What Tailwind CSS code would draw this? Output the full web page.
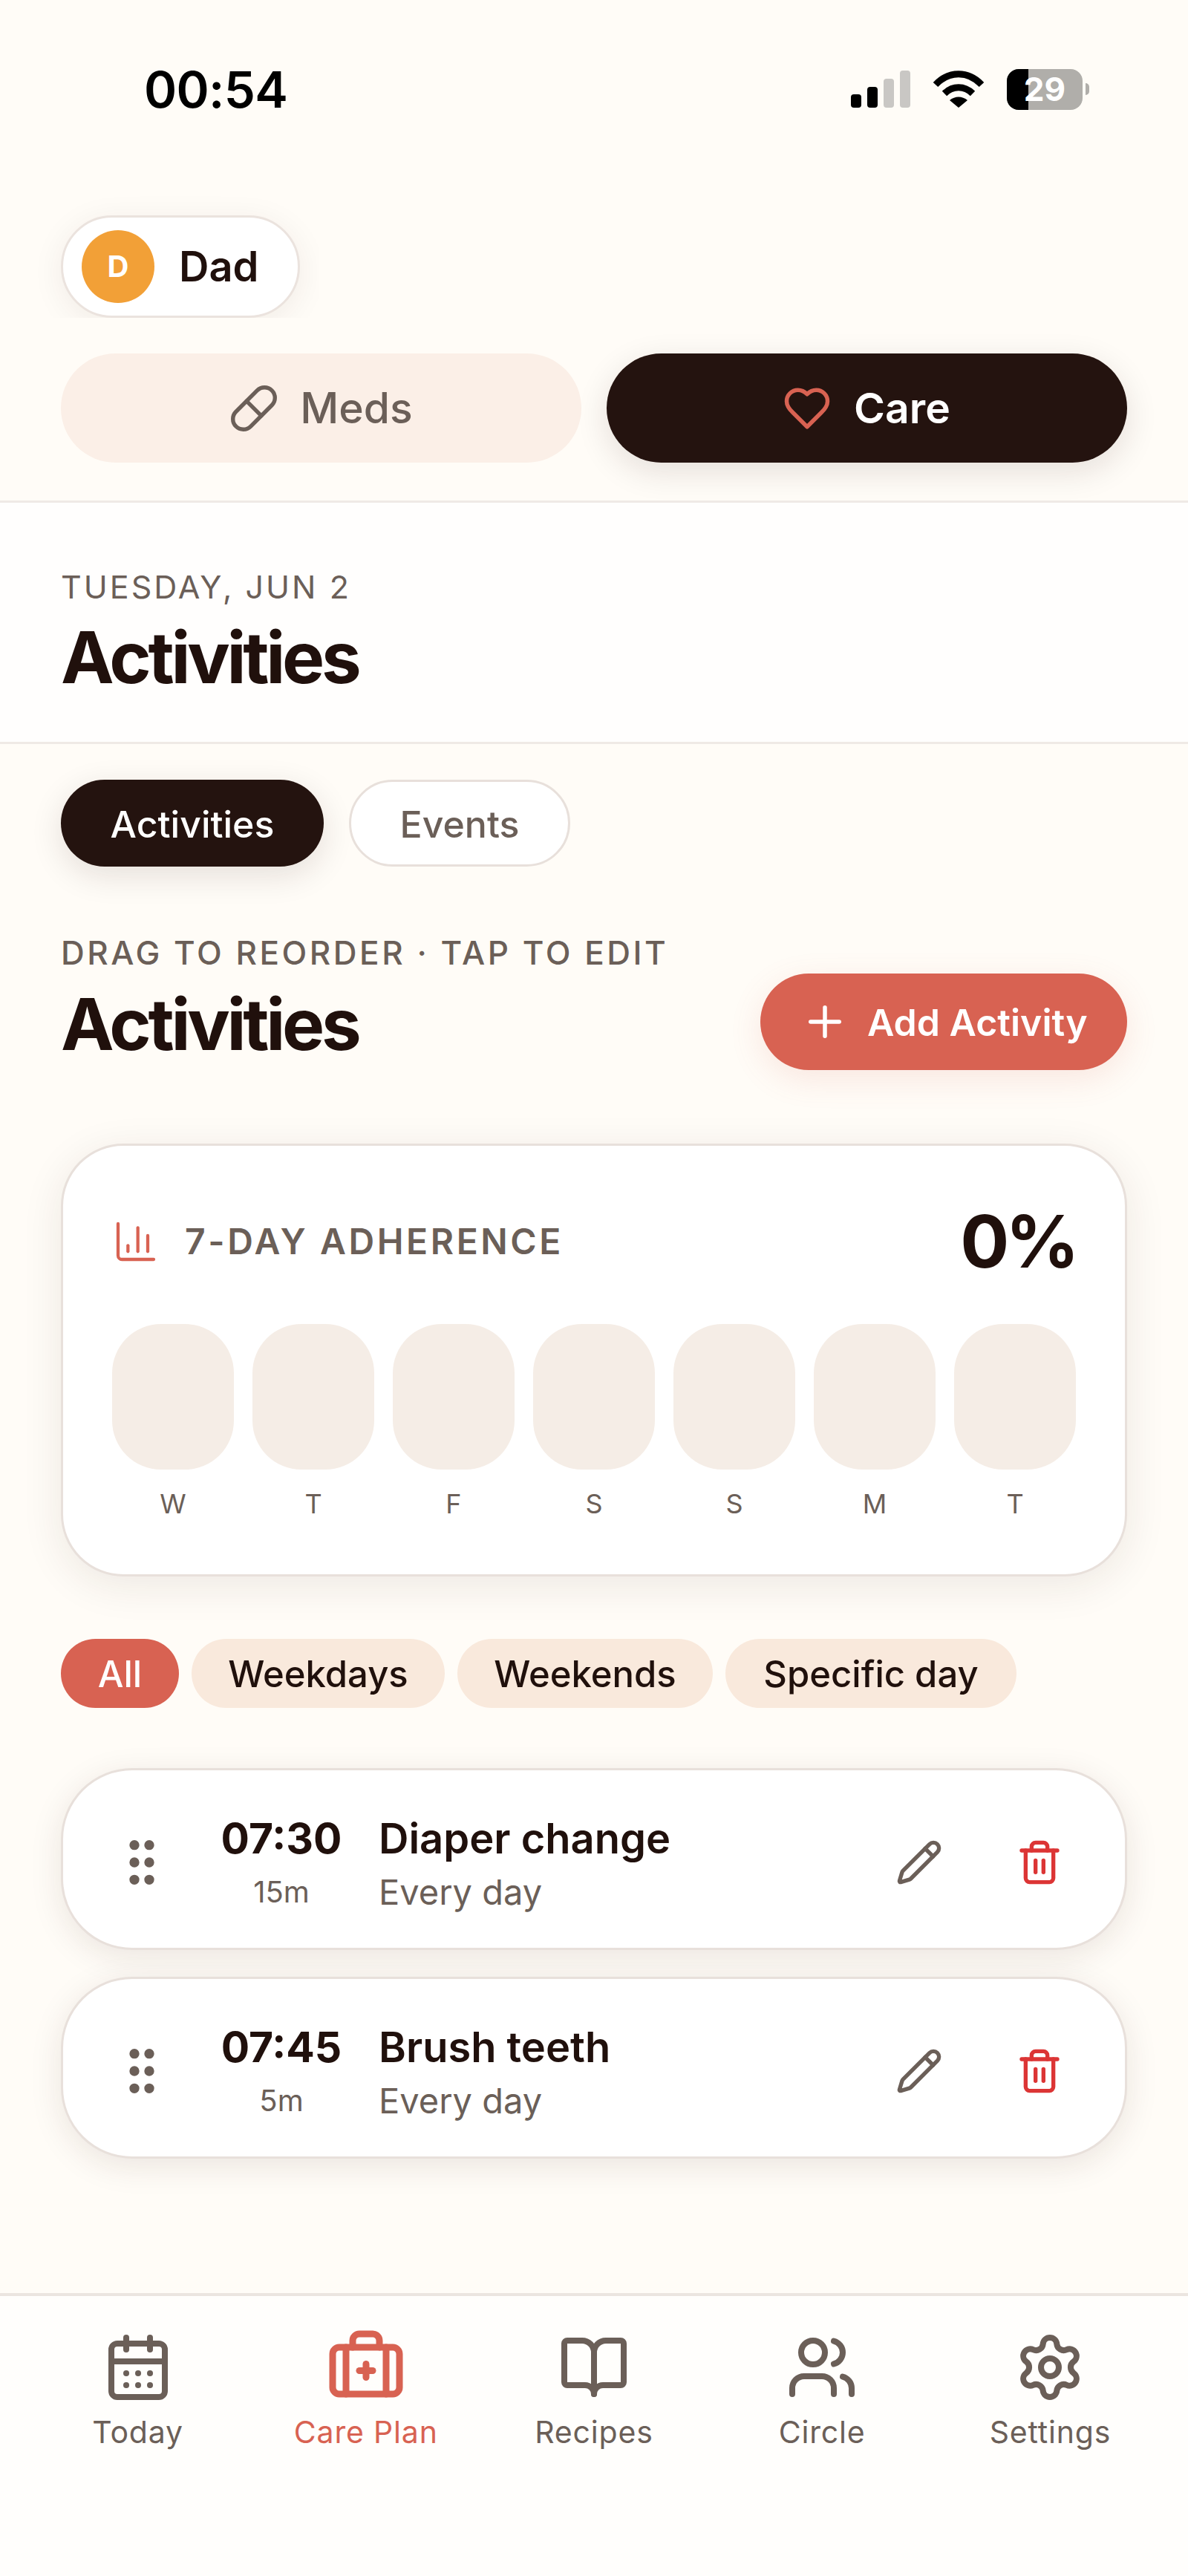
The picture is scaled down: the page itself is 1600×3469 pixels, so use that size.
<!DOCTYPE html>
<html>
<head>
<meta charset="utf-8">
<script src="https://cdn.jsdelivr.net/npm/@tailwindcss/browser@4"></script>
</head>
<body>
<div class="w-[1600px] h-[3469px] bg-[#fffcf7] flex flex-col overflow-hidden font-['Inter',sans-serif] text-[#20100c]">

  <!-- status bar -->
  <div class="h-[250px] pb-[10px] pl-[194px] pr-[133px] flex items-center justify-between text-black">
    <div class="text-[67px] leading-none font-semibold tracking-[-0.01em]">00:54</div>
    <div class="flex items-center gap-[30px]">
      <div class="flex items-end gap-[8px] h-[50px]">
        <div class="w-[14px] h-[18px] rounded-[4px] bg-black"></div>
        <div class="w-[14px] h-[28px] rounded-[4px] bg-black"></div>
        <div class="w-[14px] h-[39px] rounded-[4px] bg-[#c9c7c4]"></div>
        <div class="w-[14px] h-[50px] rounded-[4px] bg-[#c9c7c4]"></div>
      </div>
      <svg width="70" height="52" viewBox="0 0 70 52" fill="none" stroke="black" stroke-width="9" class="block">
        <path d="M4 20 C22 1 48 1 66 20"/>
        <path d="M16 32 C27 21 43 21 54 32"/>
        <path d="M35 51 L23 41 C30 35 40 35 47 41 Z" fill="black" stroke="none"/>
      </svg>
      <div class="flex items-center gap-[4px]">
        <div class="relative w-[102px] h-[55px] rounded-[16px] overflow-hidden bg-[#b0aeaa]">
          <div class="absolute left-0 top-0 bottom-0 w-[29px] bg-black"></div>
          <div class="absolute inset-0 flex items-center justify-center text-white text-[44px] leading-none font-bold">29</div>
        </div>
        <div class="w-[5px] h-[16px] rounded-r-full bg-[#b0aeaa]"></div>
      </div>
    </div>
  </div>

  <!-- person chip -->
  <div class="w-[430px] h-[178px] pl-[82px] pt-[40px] overflow-hidden">
    <div class="w-[322px] h-[138px] rounded-full bg-white border-[3px] border-[#ebe3de] shadow-[0_8px_44px_rgba(60,30,20,0.07)] flex items-center pl-[25px]">
      <div class="w-[98px] h-[98px] rounded-full bg-[#f2a037] text-white text-[40px] font-bold flex items-center justify-center">D</div>
      <div class="ml-[33px] text-[56px] leading-none font-semibold">Dad</div>
    </div>
  </div>

  <!-- meds / care -->
  <div class="mt-[48px] px-[82px] grid grid-cols-2 gap-[34px]">
    <div class="h-[147px] rounded-full bg-[#fbefe7] flex items-center justify-center gap-[28px] text-[#6b5f58]">
      <svg class="-ml-[1px]" width="68" height="68" viewBox="0 0 24 24" fill="none" stroke="currentColor" stroke-width="1.9" stroke-linecap="round" stroke-linejoin="round"><path d="m10.5 20.5 10-10a4.95 4.95 0 1 0-7-7l-10 10a4.95 4.95 0 1 0 7 7Z"/><path d="m8.5 8.5 7 7"/></svg>
      <span class="text-[57px] leading-none font-medium">Meds</span>
    </div>
    <div class="h-[147px] rounded-full bg-[#24130f] shadow-[0_12px_44px_rgba(40,20,15,0.12)] flex items-center justify-center gap-[30px] text-white">
      <svg class="-ml-[1px]" width="66" height="66" viewBox="0 0 24 24" fill="none" stroke="#d86252" stroke-width="2" stroke-linecap="round" stroke-linejoin="round"><path d="M19 14c1.49-1.46 3-3.21 3-5.5A5.5 5.5 0 0 0 16.5 3c-1.76 0-3 .5-4.5 2-1.5-1.5-2.74-2-4.5-2A5.5 5.5 0 0 0 2 8.5c0 2.3 1.5 4.05 3 5.5l7 7Z"/></svg>
      <span class="text-[57px] leading-none font-semibold">Care</span>
    </div>
  </div>

  <!-- date header -->
  <div class="mt-[51px] h-[328px] bg-[#fffefd] border-y-[3px] border-[#efeae6] px-[82px]">
    <div class="mt-[87px] text-[43px] leading-[52px] tracking-[0.07em] text-[#6b5f58]">TUESDAY, JUN 2</div>
    <div class="mt-[13px] text-[96px] leading-[112px] font-bold tracking-[-0.044em]">Activities</div>
  </div>

  <!-- main -->
  <div class="flex-1 px-[82px]">
    <div class="mt-[48px] flex gap-[34px]">
      <div class="h-[117px] w-[354px] rounded-full bg-[#24130f] shadow-[0_12px_44px_rgba(40,20,15,0.12)] text-white text-[50px] leading-[52px] font-medium flex items-center justify-center pt-[2px]">Activities</div>
      <div class="h-[117px] w-[298px] rounded-full bg-white border-[3px] border-[#e8e0db] text-[#6b5f58] text-[50px] leading-[52px] font-medium flex items-center justify-center pt-[2px]">Events</div>
    </div>

    <div class="flex justify-between items-start">
      <div class="mt-[90px]">
        <div class="text-[44px] leading-[52px] font-medium tracking-[0.08em] text-[#6b5f58]">DRAG TO REORDER · TAP TO EDIT</div>
        <div class="mt-[14px] text-[96px] leading-[112px] font-bold tracking-[-0.044em]">Activities</div>
      </div>
      <div class="mt-[144px] h-[130px] w-[494px] rounded-full bg-[#d86252] shadow-[0_12px_44px_rgba(216,98,82,0.14)] text-white flex items-center pl-[54px] gap-[24px]">
        <svg width="66" height="66" viewBox="0 0 24 24" fill="none" stroke="currentColor" stroke-width="2" stroke-linecap="round" stroke-linejoin="round"><path d="M5 12h14"/><path d="M12 5v14"/></svg>
        <span class="text-[50px] leading-[52px] font-semibold pt-[2px]">Add Activity</span>
      </div>
    </div>

    <!-- adherence card -->
    <div class="mt-[99px] h-[583px] rounded-[84px] bg-white border-[3px] border-[#e8e0db] shadow-[0_12px_56px_rgba(60,30,20,0.09)] px-[66px] pt-[69px]">
      <div class="h-[120px] flex items-center justify-between">
        <div class="flex items-center gap-[34px]">
          <svg width="64" height="64" viewBox="0 0 24 24" fill="none" stroke="#d86252" stroke-width="1.6" stroke-linecap="round" stroke-linejoin="round"><path d="M3 3v16a2 2 0 0 0 2 2h16"/><path d="M18 17V9"/><path d="M13 17V5"/><path d="M8 17v-3"/></svg>
          <span class="text-[48px] leading-none font-semibold tracking-[0.075em] text-[#6b5f58]">7-DAY ADHERENCE</span>
        </div>
        <div class="text-[98px] leading-none font-bold tracking-[-0.05em]">0%</div>
      </div>
      <div class="mt-[51px] grid grid-cols-7 gap-[25px]">
        <div class="h-[196px] rounded-[66px] bg-[#f5ede6]"></div>
        <div class="h-[196px] rounded-[66px] bg-[#f5ede6]"></div>
        <div class="h-[196px] rounded-[66px] bg-[#f5ede6]"></div>
        <div class="h-[196px] rounded-[66px] bg-[#f5ede6]"></div>
        <div class="h-[196px] rounded-[66px] bg-[#f5ede6]"></div>
        <div class="h-[196px] rounded-[66px] bg-[#f5ede6]"></div>
        <div class="h-[196px] rounded-[66px] bg-[#f5ede6]"></div>
      </div>
      <div class="mt-[22px] grid grid-cols-7 gap-[25px] text-center text-[36px] leading-[48px] text-[#6b5f58]">
        <div>W</div><div>T</div><div>F</div><div>S</div><div>S</div><div>M</div><div>T</div>
      </div>
    </div>

    <!-- filters -->
    <div class="mt-[84px] flex gap-[17px] text-[49px] leading-[52px] font-medium">
      <div class="h-[93px] w-[159px] rounded-full bg-[#d86252] text-white flex items-center justify-center pt-[2px]">All</div>
      <div class="h-[93px] w-[341px] rounded-full bg-[#f9e9dc] flex items-center justify-center pt-[2px]">Weekdays</div>
      <div class="h-[93px] w-[344px] rounded-full bg-[#f9e9dc] flex items-center justify-center pt-[2px]">Weekends</div>
      <div class="h-[93px] w-[392px] rounded-full bg-[#f9e9dc] flex items-center justify-center pt-[2px]">Specific day</div>
    </div>

    <!-- rows -->
    <div class="mt-[81px] flex flex-col gap-[36px]">
      <div class="h-[245px] rounded-[96px] bg-white border-[3px] border-[#e8e0db] shadow-[0_10px_44px_rgba(60,30,20,0.10)] flex items-center pl-[66px] pr-[83px]">
        <svg class="mt-[9px] shrink-0" width="80" height="80" viewBox="0 0 24 24" fill="#6b5f58" stroke="#6b5f58" stroke-width="2"><circle cx="9" cy="12" r="1"/><circle cx="9" cy="5" r="1"/><circle cx="9" cy="19" r="1"/><circle cx="15" cy="12" r="1"/><circle cx="15" cy="5" r="1"/><circle cx="15" cy="19" r="1"/></svg>
        <div class="mt-[17px] ml-[58px] w-[180px] text-center shrink-0">
          <div class="text-[57px] leading-[72px] font-bold">07:30</div>
          <div class="text-[40px] leading-[72px] text-[#6b5f58]">15m</div>
        </div>
        <div class="mt-[17px] ml-[41px] flex-1">
          <div class="text-[56px] leading-[72px] font-semibold">Diaper change</div>
          <div class="text-[47px] leading-[72px] text-[#6b5f58]">Every day</div>
        </div>
        <svg class="mt-[9px] shrink-0" width="64" height="64" viewBox="0 0 24 24" fill="none" stroke="#6b5f58" stroke-width="2" stroke-linecap="round" stroke-linejoin="round"><path d="M21.174 6.812a1 1 0 0 0-3.986-3.987L3.842 16.174a2 2 0 0 0-.5.83l-1.321 4.352a.5.5 0 0 0 .623.622l4.353-1.32a2 2 0 0 0 .83-.497z"/><path d="m15 5 4 4"/></svg>
        <svg class="mt-[9px] ml-[98px] shrink-0" width="64" height="64" viewBox="0 0 24 24" fill="none" stroke="#dc3535" stroke-width="2" stroke-linecap="round" stroke-linejoin="round"><path d="M3 6h18"/><path d="M19 6v14c0 1-1 2-2 2H7c-1 0-2-1-2-2V6"/><path d="M8 6V4c0-1 1-2 2-2h4c1 0 2 1 2 2v2"/><path d="M10 11v6"/><path d="M14 11v6"/></svg>
      </div>
      <div class="h-[245px] rounded-[96px] bg-white border-[3px] border-[#e8e0db] shadow-[0_10px_44px_rgba(60,30,20,0.10)] flex items-center pl-[66px] pr-[83px]">
        <svg class="mt-[9px] shrink-0" width="80" height="80" viewBox="0 0 24 24" fill="#6b5f58" stroke="#6b5f58" stroke-width="2"><circle cx="9" cy="12" r="1"/><circle cx="9" cy="5" r="1"/><circle cx="9" cy="19" r="1"/><circle cx="15" cy="12" r="1"/><circle cx="15" cy="5" r="1"/><circle cx="15" cy="19" r="1"/></svg>
        <div class="mt-[17px] ml-[58px] w-[180px] text-center shrink-0">
          <div class="text-[57px] leading-[72px] font-bold">07:45</div>
          <div class="text-[40px] leading-[72px] text-[#6b5f58]">5m</div>
        </div>
        <div class="mt-[17px] ml-[41px] flex-1">
          <div class="text-[56px] leading-[72px] font-semibold">Brush teeth</div>
          <div class="text-[47px] leading-[72px] text-[#6b5f58]">Every day</div>
        </div>
        <svg class="mt-[9px] shrink-0" width="64" height="64" viewBox="0 0 24 24" fill="none" stroke="#6b5f58" stroke-width="2" stroke-linecap="round" stroke-linejoin="round"><path d="M21.174 6.812a1 1 0 0 0-3.986-3.987L3.842 16.174a2 2 0 0 0-.5.83l-1.321 4.352a.5.5 0 0 0 .623.622l4.353-1.32a2 2 0 0 0 .83-.497z"/><path d="m15 5 4 4"/></svg>
        <svg class="mt-[9px] ml-[98px] shrink-0" width="64" height="64" viewBox="0 0 24 24" fill="none" stroke="#dc3535" stroke-width="2" stroke-linecap="round" stroke-linejoin="round"><path d="M3 6h18"/><path d="M19 6v14c0 1-1 2-2 2H7c-1 0-2-1-2-2V6"/><path d="M8 6V4c0-1 1-2 2-2h4c1 0 2 1 2 2v2"/><path d="M10 11v6"/><path d="M14 11v6"/></svg>
      </div>
    </div>
  </div>

  <!-- bottom nav -->
  <div class="h-[381px] bg-[#fffefc] border-t-[4px] border-[#ebe5e0] px-[32px] pt-[42px] grid grid-cols-5 text-[41px] leading-[52px] tracking-[0.02em] text-[#6b5f58]">
    <div class="flex flex-col items-center">
      <div class="h-[108px] flex items-center justify-center">
        <svg width="96" height="96" viewBox="0 0 24 24" fill="none" stroke="currentColor" stroke-width="2" stroke-linecap="round" stroke-linejoin="round"><path d="M8 2v4"/><path d="M16 2v4"/><rect width="18" height="18" x="3" y="4" rx="2"/><path d="M3 10h18"/><path d="M8 14h.01"/><path d="M12 14h.01"/><path d="M16 14h.01"/><path d="M8 18h.01"/><path d="M12 18h.01"/><path d="M16 18h.01"/></svg>
      </div>
      <div class="mt-[7px]">Today</div>
    </div>
    <div class="flex flex-col items-center text-[#d86252]">
      <div class="h-[108px] flex items-center justify-center">
        <svg width="108" height="108" viewBox="0 0 24 24" fill="none" stroke="currentColor" stroke-width="2" stroke-linecap="round" stroke-linejoin="round"><path d="M12 11v4"/><path d="M14 13h-4"/><path d="M16 6V4a2 2 0 0 0-2-2h-4a2 2 0 0 0-2 2v2"/><path d="M18 6v14"/><path d="M6 6v14"/><rect width="20" height="14" x="2" y="6" rx="2"/></svg>
      </div>
      <div class="mt-[7px]">Care Plan</div>
    </div>
    <div class="flex flex-col items-center">
      <div class="h-[108px] flex items-center justify-center">
        <svg width="96" height="96" viewBox="0 0 24 24" fill="none" stroke="currentColor" stroke-width="2" stroke-linecap="round" stroke-linejoin="round"><path d="M12 7v14"/><path d="M3 18a1 1 0 0 1-1-1V4a1 1 0 0 1 1-1h5a4 4 0 0 1 4 4 4 4 0 0 1 4-4h5a1 1 0 0 1 1 1v13a1 1 0 0 1-1 1h-6a3 3 0 0 0-3 3 3 3 0 0 0-3-3z"/></svg>
      </div>
      <div class="mt-[7px]">Recipes</div>
    </div>
    <div class="flex flex-col items-center">
      <div class="h-[108px] flex items-center justify-center">
        <svg width="96" height="96" viewBox="0 0 24 24" fill="none" stroke="currentColor" stroke-width="2" stroke-linecap="round" stroke-linejoin="round"><path d="M16 21v-2a4 4 0 0 0-4-4H6a4 4 0 0 0-4 4v2"/><path d="M16 3.128a4 4 0 0 1 0 7.744"/><path d="M22 21v-2a4 4 0 0 0-3-3.87"/><circle cx="9" cy="7" r="4"/></svg>
      </div>
      <div class="mt-[7px]">Circle</div>
    </div>
    <div class="flex flex-col items-center">
      <div class="h-[108px] flex items-center justify-center">
        <svg width="96" height="96" viewBox="0 0 24 24" fill="none" stroke="currentColor" stroke-width="2" stroke-linecap="round" stroke-linejoin="round"><path d="M9.671 4.136a2.34 2.34 0 0 1 4.659 0 2.34 2.34 0 0 0 3.319 1.915 2.34 2.34 0 0 1 2.33 4.033 2.34 2.34 0 0 0 0 3.831 2.34 2.34 0 0 1-2.33 4.033 2.34 2.34 0 0 0-3.319 1.915 2.34 2.34 0 0 1-4.659 0 2.34 2.34 0 0 0-3.32-1.915 2.34 2.34 0 0 1-2.33-4.033 2.34 2.34 0 0 0 0-3.831A2.34 2.34 0 0 1 6.35 6.051a2.34 2.34 0 0 0 3.319-1.915"/><circle cx="12" cy="12" r="3"/></svg>
      </div>
      <div class="mt-[7px]">Settings</div>
    </div>
  </div>
</div>
</body>
</html>
